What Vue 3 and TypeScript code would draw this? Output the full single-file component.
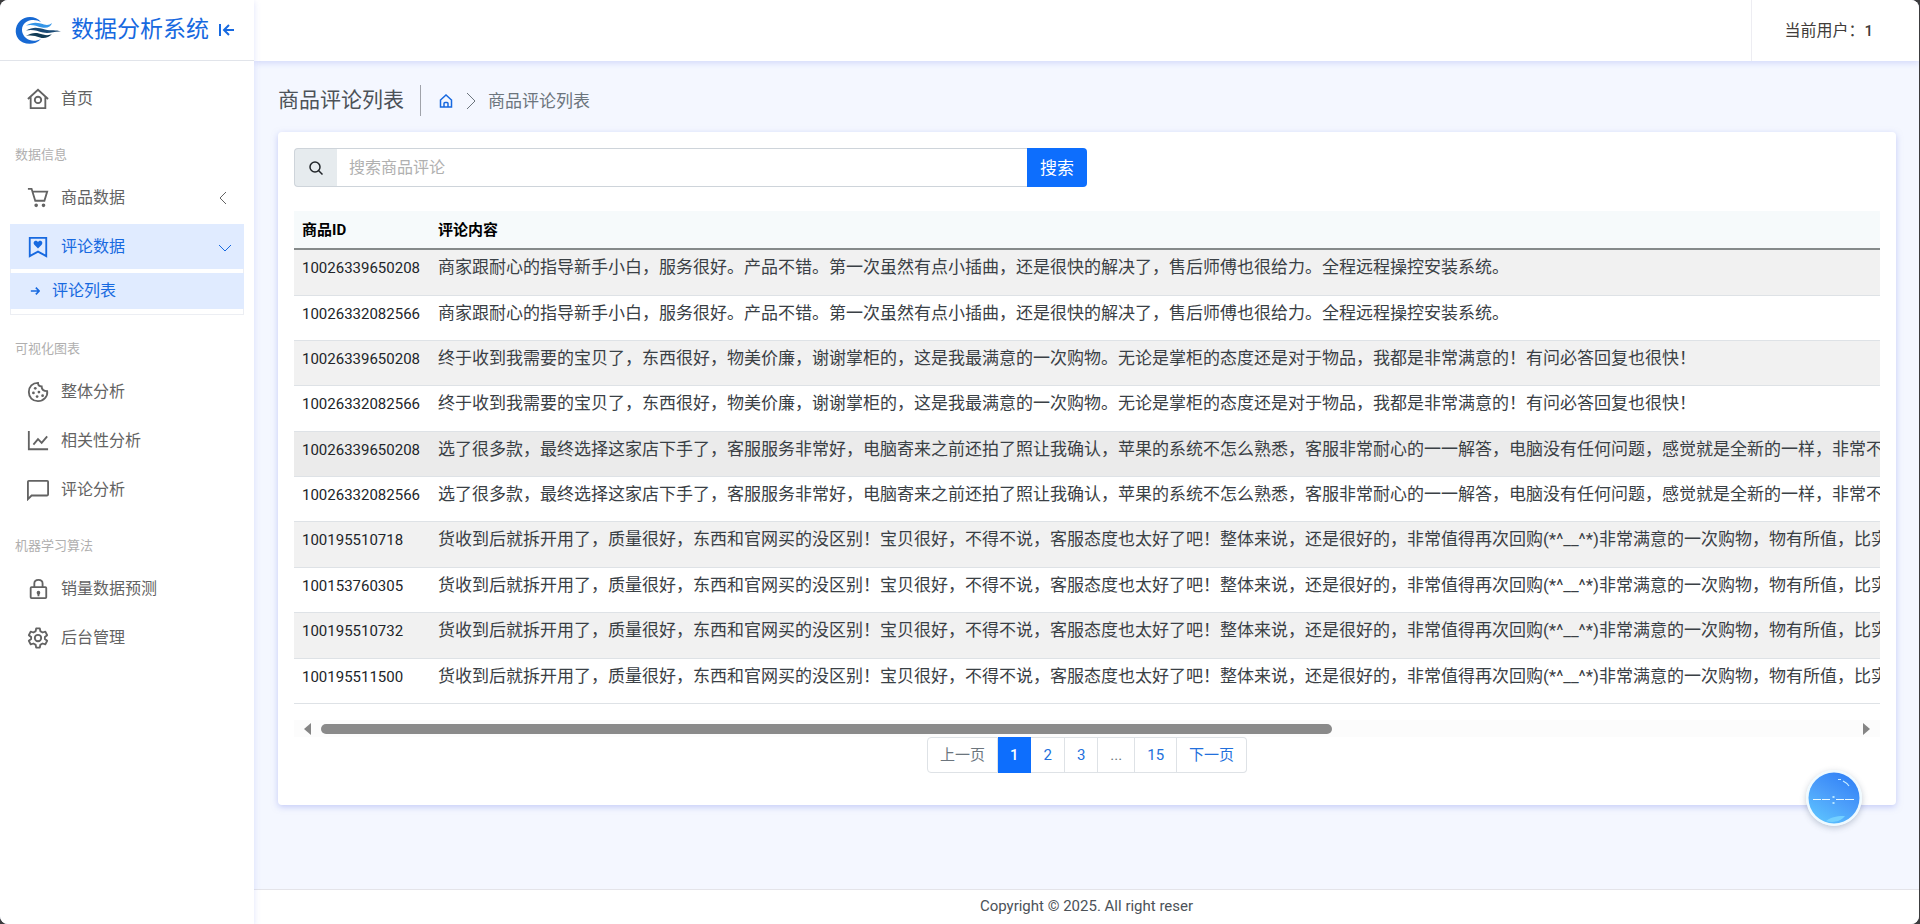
<script setup lang="ts">
import { ref } from 'vue'

interface Comment {
  id: string
  text: string
}

const keyword = ref('')

const solution =
  '商家跟耐心的指导新手小白，服务很好。产品不错。第一次虽然有点小插曲，还是很快的解决了，售后师傅也很给力。全程远程操控安装系统。'
const satisfied =
  '终于收到我需要的宝贝了，东西很好，物美价廉，谢谢掌柜的，这是我最满意的一次购物。无论是掌柜的态度还是对于物品，我都是非常满意的！有问必答回复也很快！'
const chosen =
  '选了很多款，最终选择这家店下手了，客服服务非常好，电脑寄来之前还拍了照让我确认，苹果的系统不怎么熟悉，客服非常耐心的一一解答，电脑没有任何问题，感觉就是全新的一样，非常不错'
const received =
  '货收到后就拆开用了，质量很好，东西和官网买的没区别！宝贝很好，不得不说，客服态度也太好了吧！整体来说，还是很好的，非常值得再次回购(*^__^*)非常满意的一次购物，物有所值，比实体'

const comments: Comment[] = [
  { id: '10026339650208', text: solution },
  { id: '10026332082566', text: solution },
  { id: '10026339650208', text: satisfied },
  { id: '10026332082566', text: satisfied },
  { id: '10026339650208', text: chosen },
  { id: '10026332082566', text: chosen },
  { id: '100195510718', text: received },
  { id: '100153760305', text: received },
  { id: '100195510732', text: received },
  { id: '100195511500', text: received },
]

const hovered = 4
const pages = ['2', '3', '...', '15']
</script>

<template>
  <div class="shell">
    <aside class="sidebar">
      <div class="brand">
        <svg class="brand-logo" viewBox="0 0 46 28" aria-hidden="true">
          <path d="M26 6C21 0 11-1 5 5c-7 7-5 18 3 21.500C14 29 21 28 26 23c-5 2.500-11 2.500-15-1C5 17 6 8.500 12 5.500 17 3 22 4 26 6Z" fill="#1769d3" />
          <path d="M11 9.500c7-4 12-3 18-1 3 1 6 .5 8-1.500-1 4-5 5.500-10 4.500-6-1.500-10-3.500-16-2Z" fill="#3596e8" />
          <path d="M11 14.500c7-4 12-3 19-1 6 1.500 11 0 16 2-7-.5-11 2.500-18 1-6-1.500-10-3.500-17-2Z" fill="#1a4a75" />
          <path d="M11 20c6-4 11-3.500 17-1.500 4 1.300 7 .5 9-.5-3 3.500-8 5-12 3.500-5-1.700-9-2.500-14-1.500Z" fill="#123c56" />
        </svg>
        <span class="brand-name">数据分析系统</span>
        <button class="collapse" type="button" aria-label="收起菜单">
          <svg viewBox="0 0 16 14"><path d="M1 1v12M5 7h10M10 2 5 7l5 5" /></svg>
        </button>
      </div>

      <nav class="menu">
        <a class="item" href="#home">
          <svg viewBox="0 0 24 24"><path d="M1 12 12 2l11 10M4 10v12h16V10" /><circle cx="12" cy="13" r="3.500" /></svg>
          <span>首页</span>
        </a>
        <h6 class="label">数据信息</h6>
        <a class="item" href="#goods">
          <svg viewBox="0 0 24 24"><path d="M1 2h4l4 13h10l3-10H6" /><circle class="solid" cx="10" cy="20" r="1" /><circle class="solid" cx="18" cy="20" r="1" /></svg>
          <span>商品数据</span>
          <svg class="chevron" viewBox="0 0 12 12"><path d="M7 0 1 6l6 6" /></svg>
        </a>
        <div class="group">
          <a class="item active" href="#comments">
            <svg viewBox="0 0 24 24"><path d="M3 2h18v20l-9-5-9 5Z" /><path class="heart" d="M12 13.500 8 9.500C5.500 6 10 3.500 12 6.500c2-3 6.500-.5 4 3Z" /></svg>
            <span>评论数据</span>
            <svg class="chevron" viewBox="0 0 12 12"><path d="m0 4 6 6 6-6" /></svg>
          </a>
          <a class="sub" href="#comment-list">
            <svg viewBox="0 0 12 12"><path d="M1 6h9M7 2l4 4-4 4" /></svg>
            <span>评论列表</span>
          </a>
        </div>
        <h6 class="label">可视化图表</h6>
        <a class="item" href="#overall">
          <svg viewBox="0 0 24 24"><path d="M12 2c0 3 2 4 4 4 0 3 2 5 6 5 1 6-4 11-10 11S2 18 2 12 6 2 12 2Z" /><g class="dots"><circle cx="9" cy="8" r="1.500" /><circle cx="7" cy="13" r="1.500" /><circle cx="13" cy="12" r="1.500" /><circle cx="11" cy="17" r="1.500" /><circle cx="17" cy="16" r="1.500" /></g></svg>
          <span>整体分析</span>
        </a>
        <a class="item" href="#correlation">
          <svg viewBox="0 0 24 24"><path d="M2 1v20h21M7 16l5-6 4 4 6-7" /></svg>
          <span>相关性分析</span>
        </a>
        <a class="item" href="#analysis">
          <svg viewBox="0 0 24 24"><path d="M1 22V3q0-1 1-1h20q1 0 1 1v14q0 1-1 1H5Z" /></svg>
          <span>评论分析</span>
        </a>
        <h6 class="label">机器学习算法</h6>
        <a class="item" href="#predict">
          <svg viewBox="0 0 24 24"><rect x="4" y="10" width="17" height="12" rx="1" /><path d="M8 10V6q0-4 4.500-4T17 6v4M12.500 16v4" /><circle class="solid" cx="12.500" cy="16" r="1" /></svg>
          <span>销量数据预测</span>
        </a>
        <a class="item" href="#admin">
          <svg viewBox="0 0 24 24"><path d="m10 1.500-.5 3L7 6 4 5 2 9l2.500 2v2L2 15l2 4 3-1 2.500 1.500.5 3h4l.5-3L17 18l3 1 2-4-2.500-2v-2L22 9l-2-4-3 1-2.500-1.500-.5-3Z" stroke-linejoin="round" /><circle cx="12" cy="12" r="3.500" /></svg>
          <span>后台管理</span>
        </a>
      </nav>
    </aside>

    <div class="page">
      <header class="topbar">
        <div class="user">当前用户：<b>1</b></div>
      </header>

      <main class="content">
        <div class="crumbs">
          <h1>商品评论列表</h1>
          <nav class="trail" aria-label="导航路径">
            <a href="#home" aria-label="首页">
              <svg class="home" viewBox="0 0 14 14"><path d="M1 6.500 7 1l6 5.500M1.500 6v7h11V6M5 13V9.500q0-1 1-1h2q1 0 1 1V13" /></svg>
            </a>
            <svg class="next" viewBox="0 0 10 18"><path d="m1 1 8 8-8 8" /></svg>
            <span>商品评论列表</span>
          </nav>
        </div>

        <section class="card">
          <form class="search" @submit.prevent>
            <label class="search-icon" for="keyword" aria-label="搜索商品评论">
              <svg viewBox="0 0 14 14"><circle cx="6" cy="6" r="5" /><path d="m9.500 9.500 4 4" /></svg>
            </label>
            <input id="keyword" v-model="keyword" type="text" placeholder="搜索商品评论" />
            <button type="submit">搜索</button>
          </form>

          <div class="table-wrap">
            <table>
              <thead>
                <tr><th>商品ID</th><th>评论内容</th></tr>
              </thead>
              <tbody>
                <tr v-for="(row, i) in comments" :key="i" :class="{ hovered: i === hovered }">
                  <td class="id">{{ row.id }}</td>
                  <td class="text">{{ row.text }}</td>
                </tr>
              </tbody>
            </table>
          </div>
          <div class="scrollbar">
            <svg viewBox="0 0 7 12"><path d="M7 0v12L0 6Z" /></svg>
            <div class="rail"><div class="thumb"></div></div>
            <svg viewBox="0 0 7 12"><path d="M0 0v12l7-6Z" /></svg>
          </div>

          <nav class="pages" aria-label="分页">
            <span class="muted">上一页</span>
            <a class="current" href="#page-1" aria-current="page">1</a>
            <template v-for="p in pages" :key="p">
              <span v-if="p === '...'" class="muted">{{ p }}</span>
              <a v-else :href="'#page-' + p">{{ p }}</a>
            </template>
            <a href="#page-next">下一页</a>
          </nav>
        </section>
      </main>

      <footer class="footer">Copyright © 2025. All right reser</footer>
    </div>

    <button class="bubble" type="button" aria-label="计时">
      <svg viewBox="0 0 56 56" aria-hidden="true">
        <defs>
          <linearGradient id="ball" x1="0.2" y1="1" x2="0.8" y2="0">
            <stop offset="0" stop-color="#5cc4ff" />
            <stop offset="0.500" stop-color="#4c9efa" />
            <stop offset="1" stop-color="#2f80f6" />
          </linearGradient>
        </defs>
        <circle cx="28" cy="28" r="28" fill="#effaff" />
        <circle cx="28" cy="28" r="25.500" fill="url(#ball)" />
        <path d="M20 51c7-5 13-5 19-5-5 6-12 7-19 5Z" fill="#73d0ff" />
        <path d="M32 9.500h3M37 11q4 2 6 5" fill="none" stroke="#c9eeff" stroke-width="1.200" />
        <path d="M7 29.500h8M16 29.500h8M30 29.500h8M39 29.500h9" stroke="#e8f8ff" stroke-width="1.200" />
        <path d="M26.500 26h2v2h-2zM26.500 32h2v2h-2z" fill="#b5e4ff" />
      </svg>
    </button>
  </div>
</template>

<style>
body {
  background: #3c3c3e;
}
</style>

<style scoped>
* {
  box-sizing: border-box;
}
.shell {
  display: flex;
  min-height: 100vh;
  margin-right: 1px;
  overflow: hidden;
  border-radius: 8px;
  background: #f4f7ff;
  color: #4c5258;
  font: 15px/24px Roboto, "Noto Sans CJK SC", sans-serif;
}
a {
  color: inherit;
  text-decoration: none;
}
button {
  border: 0;
  padding: 0;
  background: none;
  font: inherit;
  cursor: pointer;
}
svg {
  flex: none;
  fill: none;
  stroke: currentColor;
  stroke-width: 2;
}
.solid {
  fill: currentColor;
}
.heart,
.dots {
  fill: currentColor;
  stroke: none;
}

/* sidebar */
.sidebar {
  flex: 0 0 254px;
  z-index: 1;
  background: #fff;
  box-shadow: 0 2px 6px rgba(150, 160, 240, 0.3);
}
.brand {
  display: flex;
  align-items: center;
  height: 61px;
  padding-left: 15px;
  border-bottom: 1px solid #e1e4ea;
  color: #1769e0;
}
.brand-logo {
  width: 46px;
  height: 28px;
  stroke: none;
}
.brand-name {
  margin-left: 10px;
  font-size: 23px;
}
.collapse {
  display: flex;
  margin-left: 10px;
  color: inherit;
}
.collapse svg {
  width: 16px;
  height: 14px;
}
.menu {
  padding: 15px 10px;
}
.item {
  display: flex;
  align-items: center;
  height: 45px;
  margin-bottom: 4px;
  padding: 0 13px 0 17px;
  color: #636363;
  font-size: 16px;
}
.item svg {
  width: 22px;
  height: 22px;
  margin-right: 12px;
}
.item .chevron {
  width: 12px;
  height: 12px;
  margin: 0 0 0 auto;
  stroke-width: 1;
}
.label {
  margin: 0;
  padding: 18px 5px 8px;
  color: #b0afaf;
  font-size: 13px;
  font-weight: 400;
  line-height: 24px;
}
.group {
  margin-bottom: 4px;
  padding-bottom: 5px;
  border: 1px solid #eceef3;
  border-top: 0;
}
.item.active,
.sub {
  margin-left: -1px;
  margin-right: -1px;
  background: #e0ebff;
  color: #1769e0;
}
.sub {
  display: flex;
  align-items: center;
  height: 36px;
  padding-left: 20px;
  font-size: 16px;
}
.sub svg {
  width: 10px;
  height: 10px;
  margin-right: 12px;
}

/* main column */
.page {
  display: flex;
  flex: 1;
  flex-direction: column;
  min-width: 0;
}
.topbar {
  display: flex;
  justify-content: flex-end;
  height: 61px;
  background: #fff;
  box-shadow: 0 2px 6px rgba(150, 160, 240, 0.35);
}
.user {
  display: flex;
  align-items: center;
  padding: 0 46px 0 32px;
  border-left: 1px solid #ededf2;
  color: #413c3a;
  font-size: 16px;
}
.user b {
  font-size: 15px;
  font-weight: 500;
}
.content {
  flex: 1;
  padding: 24px 23px 40px 24px;
}
.crumbs {
  display: flex;
  align-items: center;
  margin-bottom: 16px;
}
h1 {
  margin: 0;
  padding-right: 16px;
  border-right: 1px solid #a0a3aa;
  font-size: 21px;
  font-weight: 400;
  line-height: 31px;
}
.trail {
  display: flex;
  align-items: center;
  padding-left: 18px;
  color: #6c757d;
  font-size: 17px;
}
.trail a {
  display: flex;
  color: #1769e0;
}
.home {
  width: 14px;
  height: 14px;
  stroke-width: 1.5;
}
.next {
  width: 10px;
  height: 18px;
  margin: 0 12px 0 13px;
  stroke-width: 1;
}
.card {
  padding: 16px 16px 32px;
  border-radius: 4px;
  background: #fff;
  box-shadow: 0 2px 6px rgba(150, 160, 240, 0.5);
}
.search {
  display: flex;
  width: 50%;
  height: 39px;
  margin-bottom: 24px;
  font-size: 17px;
}
.search-icon {
  display: flex;
  align-items: center;
  justify-content: center;
  width: 43px;
  border: 1px solid #ced4da;
  border-right: 0;
  border-radius: 4px 0 0 4px;
  background: #e6ebee;
  color: #212529;
}
.search-icon svg {
  width: 14px;
  height: 14px;
  stroke-width: 1.5;
}
.search input {
  flex: 1;
  min-width: 0;
  padding: 0 12px;
  border: 1px solid #ced4da;
  border-width: 1px 0;
  outline: 0;
  background: #fff;
  color: #212529;
  font: inherit;
  font-size: 16px;
}
.search input::placeholder {
  color: #b0b0b0;
  opacity: 1;
}
.search button {
  width: 60px;
  border-radius: 0 4px 4px 0;
  background: #0d6efd;
  color: #fff;
}

/* comments */
.table-wrap {
  overflow: hidden;
}
table {
  width: 100%;
  height: 493px;
  border-collapse: collapse;
  white-space: nowrap;
}
th {
  height: 38px;
  padding: 0 8px;
  border-bottom: 2px solid #858a8a;
  background: #f6fafb;
  color: #000;
  font-weight: 700;
  text-align: left;
}
td {
  padding: 6px 8px;
  border-bottom: 1px solid #dee2e6;
  color: #212529;
  vertical-align: top;
}
.id {
  padding-right: 10px;
}
.text {
  padding-top: 5px;
  color: #3a4045;
  font-size: 17px;
}
tbody tr:nth-child(odd) {
  background: #f1f1f1;
}
tbody tr.hovered {
  background: #ebebeb;
}
.scrollbar {
  display: flex;
  align-items: center;
  gap: 10px;
  height: 17px;
  margin-top: 16px;
  padding: 0 10px;
  background: #fcfcfc;
  color: #858585;
}
.scrollbar svg {
  width: 7px;
  height: 12px;
  fill: currentColor;
  stroke: none;
}
.rail {
  flex: 1;
}
.thumb {
  width: 66%;
  height: 10px;
  border-radius: 5px;
  background: #8a8a8a;
}
.pages {
  display: flex;
  justify-content: center;
}
.pages > * {
  padding: 5px 12px;
  border: 1px solid #dee2e6;
  border-left-width: 0;
  color: #2270dc;
}
.pages > .muted {
  color: #6c757d;
}
.pages > :first-child {
  border-left-width: 1px;
  border-radius: 4px 0 0 4px;
}
.pages > :last-child {
  border-radius: 0 4px 4px 0;
}
.pages > .current {
  border-color: #0d6efd;
  background: #0d6efd;
  color: #fff;
  font-weight: 500;
}
.footer {
  padding: 4px 5px 6px;
  border-top: 1px solid #e4e4e9;
  background: #fff;
  text-align: center;
}

/* floating control above the page */
.bubble {
  position: fixed;
  right: 58px;
  bottom: 98px;
  width: 56px;
  height: 56px;
  border-radius: 50%;
  box-shadow: 0 2px 6px rgba(60, 80, 110, 0.3);
}
.bubble svg {
  display: block;
  stroke: none;
}
</style>
